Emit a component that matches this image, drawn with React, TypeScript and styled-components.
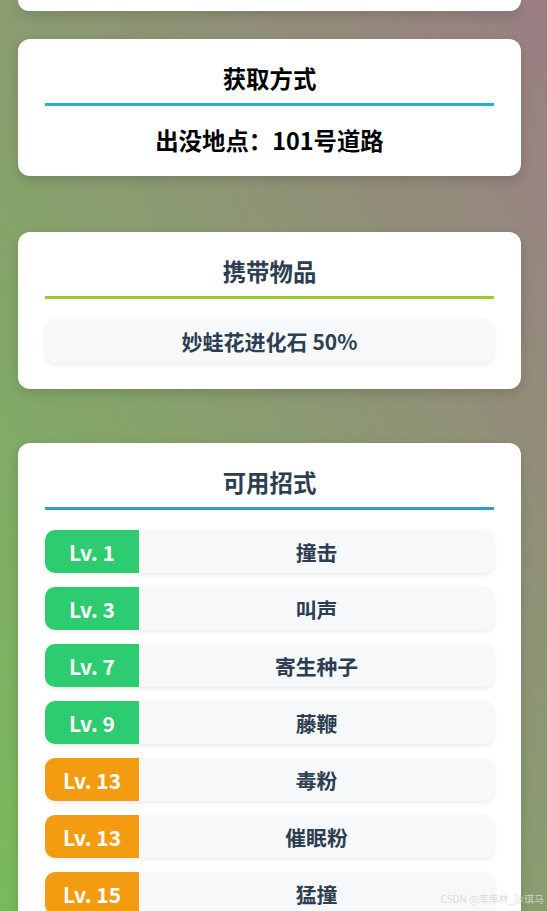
import React from "react";
import styled, { createGlobalStyle } from "styled-components";

const GlobalStyle = createGlobalStyle`
  html, body {
    margin: 0;
    padding: 0;
  }
  body {
    font-family: "Noto Sans CJK SC", "Noto Sans", sans-serif;
  }
`

const Page = styled.div`
  position: relative;
  height: 911px;
  overflow: hidden;
  padding: 0 26px 0 18px;
  background: linear-gradient(to top right, #78bb5b 0%, #9b7e84 100%);
  box-sizing: border-box;
`

const Card = styled.section<{ $top: number; $bottom: number }>`
  margin-top: ${p => p.$top}px;
  padding: 24px 27px ${p => p.$bottom}px;
  background: #fff;
  border-radius: 12px;
  box-shadow: 0 4px 12px rgba(0, 0, 0, 0.15);
`

const CardTail = styled.div`
  height: 11px;
  background: #fff;
  border-radius: 0 0 12px 12px;
  box-shadow: 0 4px 12px rgba(0, 0, 0, 0.15);
`

const Title = styled.h2<{ $line: string; $color: string }>`
  margin: 0;
  padding-bottom: 10px;
  border-bottom: 3px solid ${p => p.$line};
  font-size: 23.4px;
  line-height: 30px;
  font-weight: 700;
  text-align: center;
  color: ${p => p.$color};
`

const Info = styled.p`
  margin: 20px 0 0;
  font-size: 23.4px;
  line-height: 28px;
  font-weight: 700;
  text-align: center;
  color: #000;
`

const ItemBox = styled.div`
  margin-top: 20px;
  height: 44px;
  display: flex;
  align-items: center;
  justify-content: center;
  background: #f7f8fa;
  border-radius: 10px;
  box-shadow: 0 2px 5px rgba(0, 0, 0, 0.08);
  font-size: 21px;
  font-weight: 700;
  color: #2c3e50;
`

const MoveList = styled.div`
  margin-top: 20px;
  display: flex;
  flex-direction: column;
  gap: 14px;
`

const MoveRow = styled.div`
  display: flex;
  height: 43px;
  background: #f7f8fa;
  border-radius: 10px;
  overflow: hidden;
  box-shadow: 0 2px 5px rgba(0, 0, 0, 0.08);
`

const Level = styled.div<{ $bg: string }>`
  width: 94px;
  flex-shrink: 0;
  display: flex;
  align-items: center;
  justify-content: center;
  background: ${p => p.$bg};
  color: #fff;
  font-size: 21px;
  font-weight: 700;
`

const MoveName = styled.div`
  flex: 1;
  display: flex;
  align-items: center;
  justify-content: center;
  font-size: 20.8px;
  font-weight: 700;
  color: #2c3e50;
`

const Watermark = styled.span`
  position: absolute;
  right: 3px;
  bottom: 5px;
  font-size: 10px;
  color: rgba(215, 215, 215, 0.9);
`

const moves = [
    { lv: 1, name: "撞击" },
    { lv: 3, name: "叫声" },
    { lv: 7, name: "寄生种子" },
    { lv: 9, name: "藤鞭" },
    { lv: 13, name: "毒粉" },
    { lv: 13, name: "催眠粉" },
    { lv: 15, name: "猛撞" },
]

export default function App() {
    return (
        <>
            <GlobalStyle/>
            <Page>
                <CardTail/>
                <Card $top={28} $bottom={22}>
                    <Title $line="#22b5c6" $color="#000">获取方式</Title>
                    <Info>出没地点：101号道路</Info>
                </Card>
                <Card $top={56} $bottom={26}>
                    <Title $line="#9acd32" $color="#2c3e50">携带物品</Title>
                    <ItemBox>妙蛙花进化石 50%</ItemBox>
                </Card>
                <Card $top={54} $bottom={26}>
                    <Title $line="#3498db" $color="#2c3e50">可用招式</Title>
                    <MoveList>
                        {moves.map((m, i) => (
                            <MoveRow key={i}>
                                <Level $bg={m.lv < 10 ? "#2ecc71" : "#f39c12"}>Lv. {m.lv}</Level>
                                <MoveName>{m.name}</MoveName>
                            </MoveRow>
                        ))}
                    </MoveList>
                </Card>
                <Watermark>CSDN @库库林_沙琪马</Watermark>
            </Page>
        </>
    )
}
